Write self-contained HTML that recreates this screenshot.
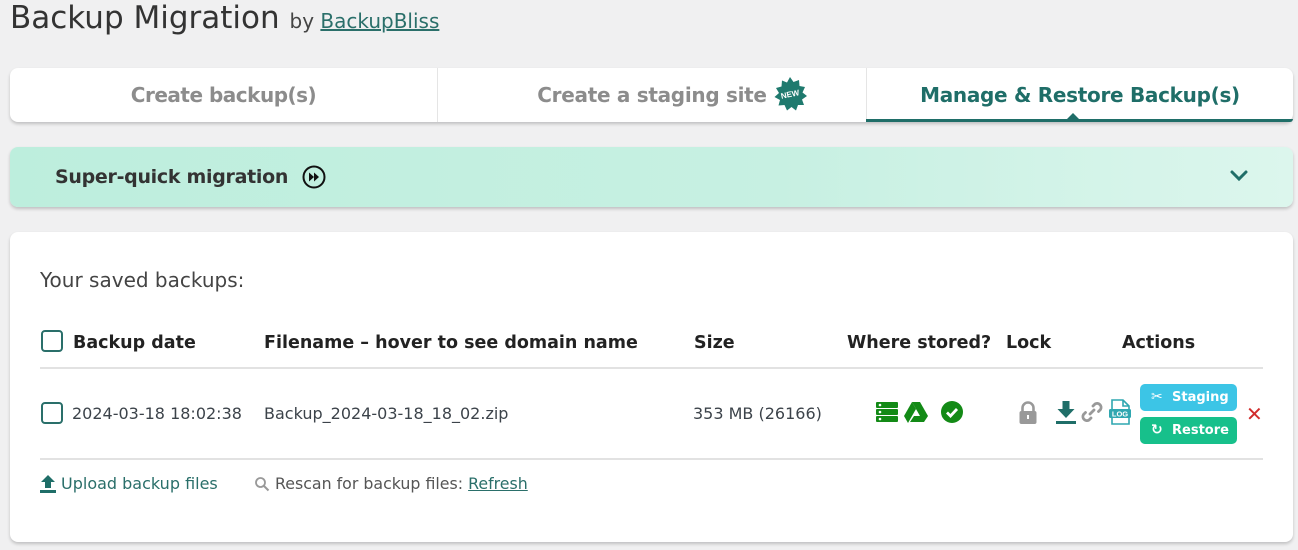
<!DOCTYPE html>
<html><head><meta charset="utf-8"><style>
*{box-sizing:border-box;margin:0;padding:0}
body{width:1298px;height:550px;background:#f0f0f1;font-family:"DejaVu Sans","Liberation Sans",sans-serif;color:#3c434a;position:relative;overflow:hidden}
.abs{position:absolute;white-space:nowrap}
.card{position:absolute;background:#fff;border-radius:8px;box-shadow:0 2px 3px rgba(0,0,0,.2)}
.tab{position:absolute;top:0;height:54px;line-height:54px;text-align:center;font-size:20px;color:#8c8c8c;font-weight:600}
.th{font-size:17.5px;font-weight:bold;color:#222;top:333px}
.cb{position:absolute;width:22px;height:22px;border:2px solid #2a6f6a;border-radius:4px;background:#fff}
.td{font-size:16px;color:#3c434a;top:404px}
.btn{position:absolute;left:1140px;width:97px;height:27px;border-radius:5px;color:#fff;font-size:13px;font-weight:bold;line-height:27px;padding-left:32px}
</style></head><body>
<div class="abs" style="left:10px;top:0px;font-size:31px;color:#333">Backup Migration <span style="font-size:20px;color:#444">by <u style="color:#2a6f6a">BackupBliss</u></span></div>

<div class="card" style="left:10px;top:68px;width:1283px;height:54px">
 <div class="tab" style="left:0;width:427px;letter-spacing:-0.5px">Create backup(s)</div>
 <div style="position:absolute;left:427px;top:0;width:1px;height:54px;background:#e5e5e5"></div>
 <div class="tab" style="left:428px;width:428px;letter-spacing:-0.3px">Create a staging site</div>
 <svg class="abs" style="left:762px;top:8px" width="36" height="36" viewBox="0 0 36 36"><polygon fill="#1f7a6e" points="18,1 21.5,6 27,4 27.5,10 33,11 30.5,16.5 35,20 30,23.5 32,29 26,29 24,34.5 19.5,31 15,34.5 12.5,29 6.5,29.5 8,24 2.5,21 7,17 4,12 9.5,10.5 10,4.5 15,6.5"/><text x="18" y="21" font-size="8" font-weight="bold" fill="#fff" text-anchor="middle" font-family="Liberation Sans,sans-serif" transform="rotate(-12 18 18)">NEW</text></svg>
 <div style="position:absolute;left:856px;top:0;width:1px;height:54px;background:#e5e5e5"></div>
 <div class="tab" style="left:857px;width:426px;color:#1f6e68;letter-spacing:-0.3px">Manage &amp; Restore Backup(s)</div>
 <div style="position:absolute;left:856px;top:51px;width:427px;height:3px;background:#1f6e68;border-radius:0 0 6px 0"></div>
 <div style="position:absolute;left:1057px;top:45px;width:0;height:0;border-left:6px solid transparent;border-right:6px solid transparent;border-bottom:6px solid #1f6e68"></div>
</div>

<div class="card" style="left:10px;top:147px;width:1283px;height:60px;background:linear-gradient(90deg,#bdeedd,#c7f0e2 60%,#dcf6ed)">
 <div class="abs" style="left:45px;top:19px;font-size:19px;font-weight:bold;color:#333;letter-spacing:-0.3px">Super-quick migration</div>
 <svg class="abs" style="left:292px;top:18px" width="24" height="24" viewBox="0 0 24 24"><circle cx="12" cy="12" r="10.5" fill="none" stroke="#111" stroke-width="2"/><path d="M7 7.5v9l5-4.5zM12 7.5v9l5-4.5z" fill="#111"/></svg>
 <svg class="abs" style="left:1219px;top:22px" width="20" height="14" viewBox="0 0 20 14"><path d="M3 3l7 7 7-7" fill="none" stroke="#1f6e68" stroke-width="3" stroke-linecap="round"/></svg>
</div>

<div class="card" style="left:10px;top:232px;width:1283px;height:310px"></div>
<div class="abs" style="left:40px;top:268px;font-size:20px;color:#444">Your saved backups:</div>

<div class="cb" style="left:41px;top:330px"></div>
<div class="abs th" style="left:73px">Backup date</div>
<div class="abs th" style="left:264px">Filename – hover to see domain name</div>
<div class="abs th" style="left:694px">Size</div>
<div class="abs th" style="left:847px">Where stored?</div>
<div class="abs th" style="left:1006px">Lock</div>
<div class="abs th" style="left:1122px">Actions</div>
<div class="abs" style="left:40px;top:367px;width:1223px;height:2px;background:#e2e2e2"></div>

<div class="cb" style="left:41px;top:402px"></div>
<div class="abs td" style="left:72px">2024-03-18 18:02:38</div>
<div class="abs td" style="left:264px">Backup_2024-03-18_18_02.zip</div>
<div class="abs td" style="left:693px">353 MB (26166)</div>

<svg class="abs" style="left:876px;top:401px" width="22" height="22" viewBox="0 0 22 22"><rect x="0" y="1" width="22" height="6" rx="1" fill="#138a16"/><rect x="0" y="8" width="22" height="6" rx="1" fill="#138a16"/><rect x="0" y="15" width="22" height="6" rx="1" fill="#138a16"/><circle cx="4" cy="4" r="1.3" fill="#fff"/><circle cx="4" cy="11" r="1.3" fill="#fff"/><circle cx="4" cy="18" r="1.3" fill="#fff"/></svg>
<svg class="abs" style="left:904px;top:401px" width="24" height="22" viewBox="0 0 24 22"><path d="M8 1h8l8 14h-8z" fill="#138a16"/><path d="M8 1l4 7-8 14L0 15z" fill="#138a16"/><path d="M6 21l4-6h14l-4 6z" fill="#138a16"/><path d="M10 15l2-3.5 2 3.5z" fill="#fff"/></svg>
<svg class="abs" style="left:941px;top:401px" width="22" height="22" viewBox="0 0 22 22"><circle cx="11" cy="11" r="11" fill="#138a16"/><path d="M6 11.5l3.5 3.5 6.5-7" fill="none" stroke="#fff" stroke-width="2.8"/></svg>

<svg class="abs" style="left:1018px;top:401px" width="20" height="24" viewBox="0 0 20 24"><path d="M4.5 11V7a5.5 5.5 0 0 1 11 0v4" fill="none" stroke="#999" stroke-width="2.6"/><rect x="1.5" y="10" width="17" height="13" rx="2" fill="#999"/><rect x="9" y="14" width="2" height="4" fill="#fff"/></svg>
<svg class="abs" style="left:1055px;top:400px" width="22" height="25" viewBox="0 0 22 25"><path d="M7.5 1h7v8h5l-8.5 9-8.5-9h5z" fill="#1f6e68"/><rect x="1" y="21" width="20" height="3" fill="#1f6e68"/></svg>
<svg class="abs" style="left:1080px;top:400px" width="24" height="24" viewBox="0 0 24 24"><g fill="none" stroke="#999" stroke-width="2.8" stroke-linecap="round"><path d="M10 14l4-4"/><path d="M13 6l2-2a4 4 0 0 1 5.5 5.5l-2 2"/><path d="M11 18l-2 2a4 4 0 0 1-5.5-5.5l2-2"/></g></svg>
<svg class="abs" style="left:1108px;top:399px" width="24" height="26" viewBox="0 0 24 26"><path d="M4 1h11l6 6v18H4z" fill="#fff" stroke="#2fa7b0" stroke-width="1.6"/><path d="M15 1v6h6" fill="none" stroke="#2fa7b0" stroke-width="1.6"/><rect x="1" y="10" width="22" height="9" rx="1.5" fill="#2fa7b0"/><text x="12" y="17.5" font-size="7.5" font-weight="bold" fill="#fff" text-anchor="middle" font-family="Liberation Sans,sans-serif">LOG</text></svg>

<div class="btn" style="top:384px;background:#3cc5e6"><span class="abs" style="left:11px;top:0;font-size:14px">✂</span>Staging</div>
<div class="btn" style="top:417px;background:#17c08b"><span class="abs" style="left:11px;top:0;font-size:14px">↻</span>Restore</div>
<div class="abs" style="left:1246px;top:402px;font-size:20px;font-weight:bold;color:#d12c2c">✕</div>

<div class="abs" style="left:40px;top:458px;width:1223px;height:2px;background:#e2e2e2"></div>
<svg class="abs" style="left:40px;top:475px" width="16" height="18" viewBox="0 0 16 18"><path d="M8 0l7 7h-4v6H5V7H1z" fill="#1f6e68"/><rect x="0" y="15" width="16" height="3" fill="#1f6e68"/></svg>
<div class="abs" style="left:61px;top:474px;font-size:16px;color:#2a6f6a">Upload backup files</div>
<svg class="abs" style="left:254px;top:476px" width="16" height="16" viewBox="0 0 16 16"><circle cx="6.5" cy="6.5" r="4.5" fill="none" stroke="#999" stroke-width="1.8"/><path d="M10 10l4.5 4.5" stroke="#999" stroke-width="2"/></svg>
<div class="abs" style="left:275px;top:474px;font-size:15.8px;color:#555">Rescan for backup files: <u style="color:#2a6f6a">Refresh</u></div>
</body></html>
